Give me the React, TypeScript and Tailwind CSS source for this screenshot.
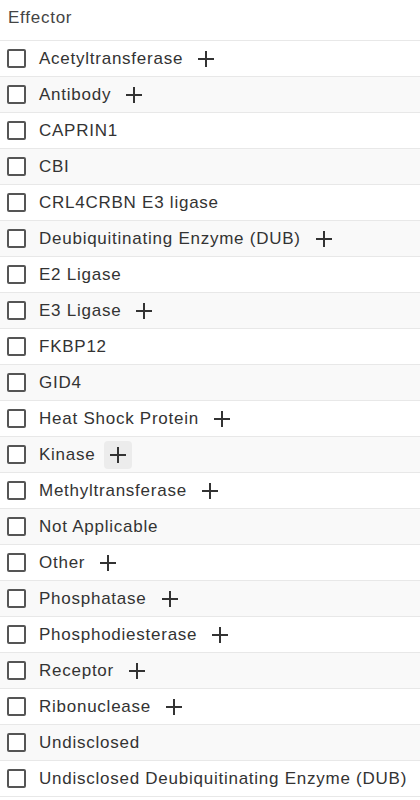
import React from "react";

const items: [string, boolean][] = [
  ["Acetyltransferase", true],
  ["Antibody", true],
  ["CAPRIN1", false],
  ["CBI", false],
  ["CRL4CRBN E3 ligase", false],
  ["Deubiquitinating Enzyme (DUB)", true],
  ["E2 Ligase", false],
  ["E3 Ligase", true],
  ["FKBP12", false],
  ["GID4", false],
  ["Heat Shock Protein", true],
  ["Kinase", true],
  ["Methyltransferase", true],
  ["Not Applicable", false],
  ["Other", true],
  ["Phosphatase", true],
  ["Phosphodiesterase", true],
  ["Receptor", true],
  ["Ribonuclease", true],
  ["Undisclosed", false],
  ["Undisclosed Deubiquitinating Enzyme (DUB)", false],
];

function Plus() {
  return (
    <svg width="18" height="18" viewBox="0 0 18 18" fill="none">
      <path d="M9 1v16M1 9h16" stroke="#333" strokeWidth="2" />
    </svg>
  );
}

export default function App() {
  return (
    <div className="w-[420px] bg-white text-[#333]" style={{ fontFamily: "'Liberation Sans', Arial, sans-serif" }}>
      <div className="h-[41px] flex items-center px-2 pb-[5px] text-[17px] tracking-[0.75px] text-[#444] border-b border-[#e8e8e8]">Effector</div>
      {items.map(([name, plus], i) => (
        <div
          key={name}
          className={`h-[36px] flex items-center border-b border-[#e8e8e8] ${i % 2 === 1 ? "bg-[#f9f9f9]" : "bg-white"}`}
        >
          <div className="ml-[7px] w-[19px] h-[19px] border-2 border-[#555] rounded-[2px] bg-white shrink-0" />
          <span className="ml-[13px] text-[17px] tracking-[0.75px] whitespace-nowrap">{name}</span>
          {plus && (
            <div
              className={`ml-[9px] w-[28px] h-[28px] rounded-[4px] flex items-center justify-center ${name === "Kinase" ? "bg-[#ececec]" : ""}`}
            >
              <Plus />
            </div>
          )}
        </div>
      ))}
    </div>
  );
}
